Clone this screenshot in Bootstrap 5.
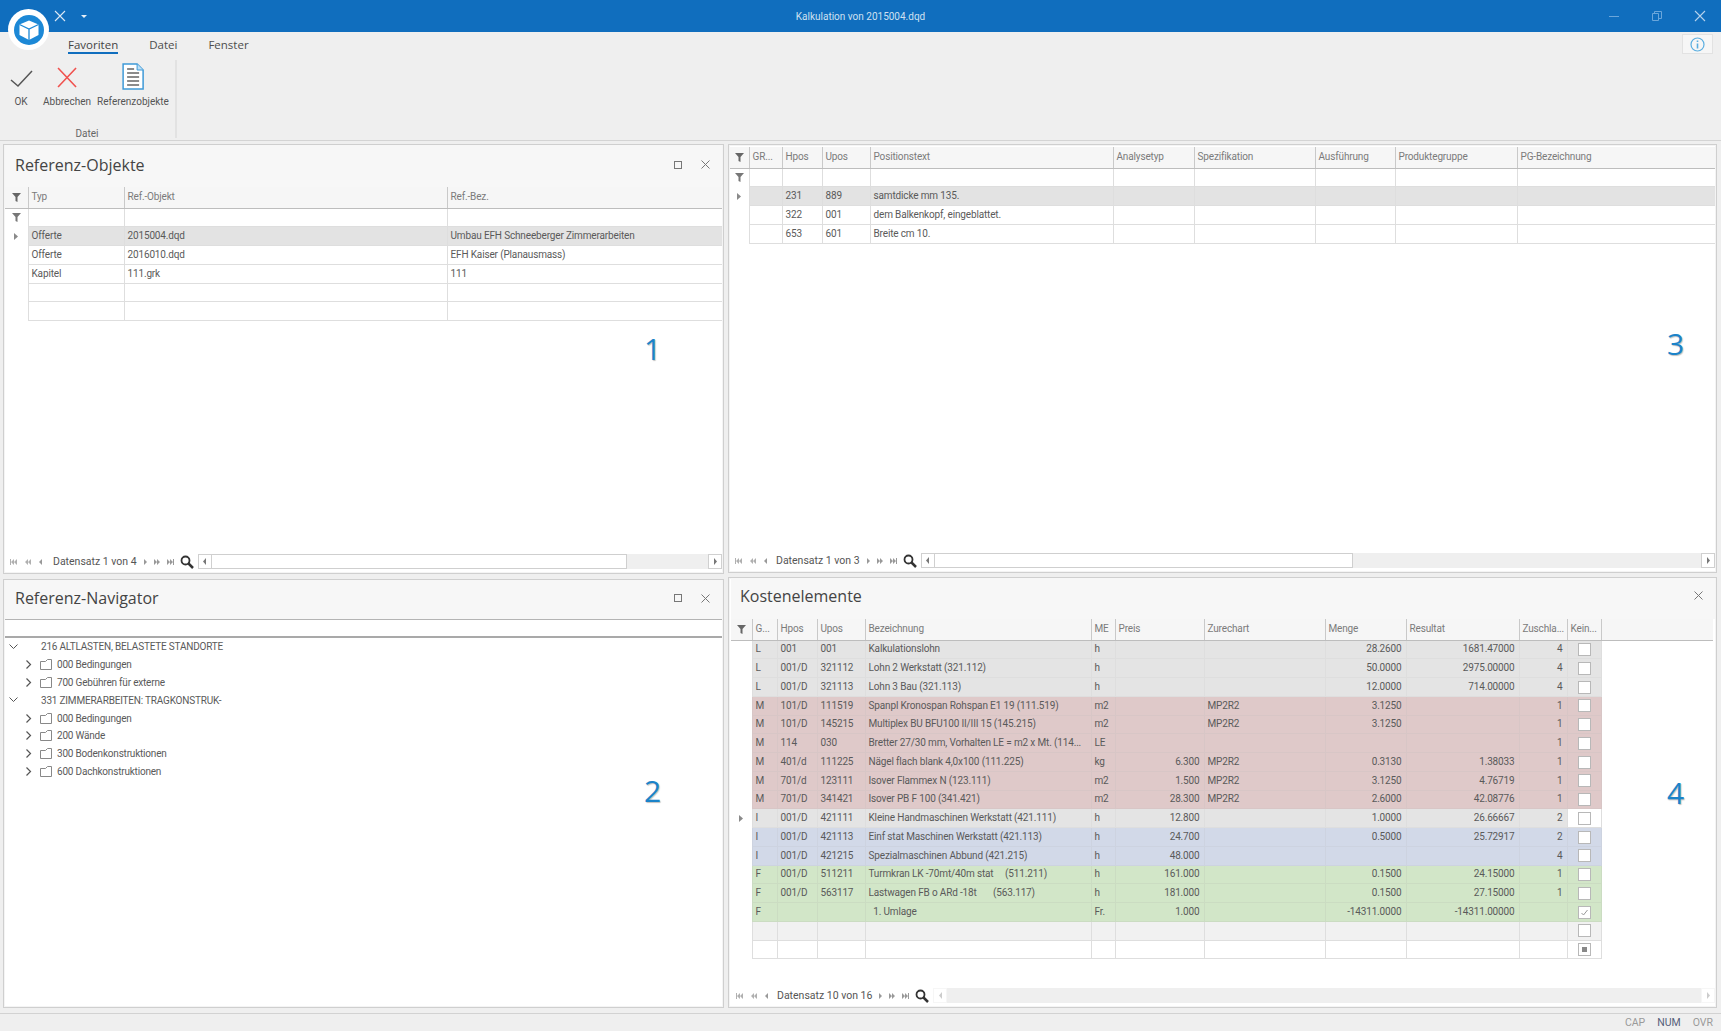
<!DOCTYPE html>
<html lang="de">
<head>
  <meta charset="UTF-8">
  <meta name="viewport" content="width=device-width, initial-scale=1">
  <title>Kalkulation von 2015004.dqd</title>
  <link href="https://cdn.jsdelivr.net/npm/bootstrap@5.3.0/dist/css/bootstrap.min.css" rel="stylesheet">
  <style>
    html, body { height: 100%; overflow: hidden; }
    body { background: #efefef; font-family: Roboto, sans-serif; font-size: 10px; color: #555; position: relative; }
    .app-shell { width: 1721px; height: 1031px; }

    /* title bar */
    .title-bar { height: 32px; background: #106ebe; color: #cfe0f1; font-size: 10px; position: relative; }
    .title-text { width: 100%; text-align: center; padding-top: 1px; }
    .win-btns { position: absolute; right: 0; top: 0; height: 32px; }
    .win-btns svg { position: absolute; top: 10px; }
    .win-min { right: 102px; } .win-max { right: 59px; } .win-close { right: 15px; }
    .qa-x { position: absolute; left: 54px; top: 10px; }
    .qa-drop { position: absolute; left: 81px; top: 15px; }
    .app-logo { position: absolute; left: 8px; top: 9px; width: 41px; height: 41px; border-radius: 50%; background: #fff; z-index: 5; }
    .app-logo svg { display: block; margin: 5.5px; }

    /* ribbon */
    .ribbon { height: 109px; border-bottom: 1px solid #d4d4d4; position: relative; }
    .rib-tabs { height: 28px; padding-left: 68px; gap: 31px; font-size: 11.5px; color: #4d4d4d; font-family: "Open Sans", sans-serif; }
    .rib-tab { height: 22px; line-height: 26px; }
    .rib-tab.on-tab { border-bottom: 2px solid #106ebe; color: #444; }
    .rib-group { width: 177px; height: 78px; border-right: 2px solid #e2e2e2; position: relative; }
    .rib-btn { position: absolute; top: 3px; text-align: center; white-space: nowrap; transform: translateX(-50%); color: #555; }
    .rib-btn svg { display: block; margin: 0 auto; height: 27px; }
    .rib-btn span { display: block; margin-top: 6px; line-height: 12px; }
    .rib-cap { position: absolute; top: 66px; left: 87px; transform: translateX(-50%); color: #666; }
    .info-btn { position: absolute; left: 1682px; top: 2px; width: 31px; height: 20px; background: #f6f6f6; border: 1px solid #e2e2e2; }
    .info-btn svg { display: block; margin: 2px auto 0; }

    /* panels */
    .dock { padding: 3px 4px 0 3px; gap: 4px; }
    .dock-left { width: 721px; }
    .dock-right { width: 989px; }
    .pane { border: 1px solid #cfcfcf; border-radius: 0; background: #fff; padding: 0 1px 1px; box-shadow: inset 0 0 0 1px #f4f4f4; }
    .pane-h1 { height: 430px; margin-bottom: 5px; }
    .pane-h2 { height: 429px; }
    .pane-h3 { height: 429px; margin-bottom: 4px; padding-top: 2px; }
    .pane-h4 { height: 431px; padding-left: 2px; }
    .pane-head { height: 42px; background: #f7f7f7; border: 0; border-radius: 0 !important; padding: 0 12px 3px 10px; color: #444; font-family: "Open Sans", sans-serif; font-size: 16px; }
    .pane-head-2 { height: 39px; padding-bottom: 3px; }
    .pane-head-4 { height: 41px; padding: 0 12px 6px 9px; }
    .pane-tools { gap: 19px; }
    .pane-body { min-height: 0; position: relative; }

    /* grids */
    .grid-wrap { flex: 1 1 auto; min-height: 0; overflow: hidden; }
    .table.grid-tbl { table-layout: fixed; margin: 0; border-collapse: collapse; }
    .table.grid-tbl > * > tr { border-width: 0; }
    .table.grid-tbl > * > tr > * { padding: 0 3px; height: 18.76px; line-height: 14px; font-size: 10px; letter-spacing: -.15px; font-weight: 400; color: #5a5a5a; border: 1px solid #dedede; white-space: pre; overflow: hidden; box-shadow: none; background: var(--cell-bg, #fff); vertical-align: middle; }
    .table.grid-tbl > thead > tr > th { height: 21px; background: #f6f6f6; color: #7b7b7b; border-width: 0 1px 1px 0; border-color: #c6c6c6 #c9c9c9 #bdbdbd; }
    .table.grid-tbl > * > tr > .ind-cell { padding: 0; text-align: center; background: #fff; border-width: 0 1px 0 0; }
    .table.grid-tbl > thead > tr > .ind-cell { background: #f6f6f6; border-bottom: 1px solid #bdbdbd; }
    .table.grid-tbl > * > tr > .fill-cell { border: 0; background: #fff; }
    .table.grid-tbl > thead > tr > .fill-cell { background: #f6f6f6; border-bottom: 1px solid #bdbdbd; }
    .table.grid-tbl > * > tr > .num-cell { text-align: right; padding-right: 4px; }
    .table.grid-tbl > * > tr > .chk-cell { padding: 0; text-align: center; }
    .row-sel { --cell-bg: #e3e3e3; }
    .row-l { --cell-bg: #e4e4e4; }
    .row-m { --cell-bg: #dfc9c9; }
    .row-i { --cell-bg: #d2d9e8; }
    .row-f { --cell-bg: #d2e6c8; }
    .row-e { --cell-bg: #f1f1f1; }
    .table.grid-tbl > * > .row-m > * { border-color: #d8c6c6; }
    .table.grid-tbl > * > .row-i > * { border-color: #cdd3e0; }
    .table.grid-tbl > * > .row-f > * { border-color: #cbdcc2; }
    .table.grid-tbl > * > tr > .foc-cell { background: #fff; }
    .chk-box { display: inline-block; width: 13px; height: 13px; background: #fff; border: 1px solid #b8b8b8; vertical-align: middle; position: relative; }
    .chk-box svg { display: block; }
    .chk-box .chk-fill { position: absolute; left: 3px; top: 3px; width: 5px; height: 5px; background: #888; }

    /* record navigator */
    .rec-nav { height: 17px; flex: 0 0 auto; margin-bottom: 2px; color: #555; }
    .rec-btns { width: 48px; flex: 0 0 auto; padding-left: 5px; }
    .rec-btns svg { display: block; margin-right: 8px; flex: 0 0 auto; }
    .rec-btns-next { width: 38px; padding-left: 3px; }
    .rec-btns-next svg { margin-right: 7px; }
    .pane-h3 .rec-btns:first-child, .pane-h4 .rec-btns:first-child { width: 46px; }
    .rec-label { flex: 0 0 auto; white-space: nowrap; padding-right: 4px; font-size: 10.5px; }
    .rec-find { margin: 0 4px 0 1px; display: block; flex: 0 0 auto; }
    .scroll-track { flex: 1 1 auto; height: 15px; background: #efefef; position: relative; }
    .scroll-btn { width: 14px; height: 15px; background: #fff; border: 1px solid #d0d0d0; flex: 0 0 auto; }
    .scroll-btn svg { display: block; margin: 3px auto; }
    .scroll-thumb { height: 15px; background: #fff; border: 1px solid #cfcfcf; border-left: 0; flex: 0 0 auto; }
    .scroll-off { border-color: #f6f6f6; }
    .thumb-1 { width: 415px; } .thumb-3 { width: 418px; }

    /* tree */
    .tree-search { height: 19px; border-top: 1px solid #b4b4b4; border-bottom: 2px solid #a9a9a9; flex: 0 0 auto; }
    .tree-row { height: 17.8px; color: #5a5a5a; white-space: nowrap; letter-spacing: -.2px; }
    .tree-row svg { display: block; flex: 0 0 auto; }
    .tree-top { padding-left: 4px; }
    .tree-top span { margin-left: 23px; }
    .tree-sub { padding-left: 21px; }
    .tree-sub .tree-folder { margin: 0 5px 0 8px; }

    /* callout numbers */
    .call-num { position: absolute; z-index: 4; color: #1b83c9; font-family: "Open Sans", sans-serif; font-size: 30px; line-height: 30px; text-shadow: 1px 1px 1px rgba(0,0,0,.25); }
    .call-1 { left: 644px; top: 334px; }
    .call-2 { left: 644px; top: 776px; }
    .call-3 { left: 1667px; top: 329px; }
    .call-4 { left: 1667px; top: 778px; }

    /* status bar */
    .status-strip { position: absolute; left: 0; right: 0; top: 1013px; height: 18px; border-top: 1px solid #d2d2d2; padding-right: 8px; gap: 12px; color: #9a9a9a; background: #efefef; font-size: 10.5px; }
    .status-on { color: #56607a; }
  </style>
</head>
<body>
  <div class="app-shell d-flex flex-column">
    <!-- Titelleiste -->
    <div class="title-bar d-flex align-items-center">
      <svg class="qa-x" width="12" height="12" viewBox="0 0 12 12"><path d="M1 1l10 10M11 1L1 11" stroke="#dbe8f5" stroke-width="1.1" fill="none"/></svg>
      <svg class="qa-drop" width="6" height="3" viewBox="0 0 6 3"><path d="M0 0h6L3 3z" fill="#e6eff8"/></svg>
      <div class="title-text">Kalkulation von 2015004.dqd</div>
      <div class="win-btns">
        <svg class="win-min" width="10" height="12" viewBox="0 0 10 12"><path d="M0 6.5h10" stroke="#6aa6db" fill="none"/></svg>
        <svg class="win-max" width="10" height="12" viewBox="0 0 10 12"><path d="M.5 3.5h6v7h-6zM2.5 3.500v-2h7v7h-3" stroke="#6aa6db" fill="none"/></svg>
        <svg class="win-close" width="12" height="12" viewBox="0 0 12 12"><path d="M1 1l10 10M11 1L1 11" stroke="#b5d2ec" stroke-width="1.1" fill="none"/></svg>
      </div>
    </div>
    <div class="app-logo">
      <svg width="30" height="30" viewBox="0 0 30 30">
        <circle cx="15" cy="15" r="15" fill="#1c88d6"/>
        <path d="M15 5.500l9.500 4v10.500L15 25l-9.500-5V9.500z" fill="#fff"/>
        <path d="M5.500 9.500L15 14l9.500-4.500M15 14v11" stroke="#1c88d6" stroke-width="1.300" fill="none"/>
      </svg>
    </div>

    <!-- Ribbon -->
    <div class="ribbon">
      <div class="rib-tabs d-flex align-items-start">
        <div class="rib-tab on-tab">Favoriten</div>
        <div class="rib-tab">Datei</div>
        <div class="rib-tab">Fenster</div>
      </div>
      <div class="rib-group">
        <div class="rib-btn" style="left:21px">
          <svg width="24" height="27" viewBox="0 0 24 27"><path d="M2 17l7 6L23 8" stroke="#555" stroke-width="1.500" fill="none"/></svg>
          <span>OK</span>
        </div>
        <div class="rib-btn" style="left:67px">
          <svg width="22" height="27" viewBox="0 0 22 27"><path d="M2 5l18 19M20 5L2 24" stroke="#f0524f" stroke-width="1.600" fill="none"/></svg>
          <span>Abbrechen</span>
        </div>
        <div class="rib-btn" style="left:133px">
          <svg width="22" height="27" viewBox="0 0 22 27">
            <path d="M1 1h14l6 6v19H1z" fill="#fff" stroke="#3f9ad8" stroke-width="1.500"/>
            <path d="M15 1v6h6" fill="#bfe0f5" stroke="#3f9ad8"/>
            <path d="M5 6h7M5 10h12M5 14h12M5 18h12M5 22h12" stroke="#666" stroke-width="1.700" fill="none"/>
          </svg>
          <span>Referenzobjekte</span>
        </div>
        <div class="rib-cap">Datei</div>
      </div>
      <div class="info-btn">
        <svg width="15" height="15" viewBox="0 0 15 15"><circle cx="7.500" cy="7.500" r="6.500" fill="none" stroke="#5aaee0" stroke-width="1.200"/><path d="M7.500 6.500v5M7.500 3.500v1.600" stroke="#5aaee0" stroke-width="1.600"/></svg>
      </div>
    </div>

    <!-- Arbeitsbereich -->
    <div class="dock d-flex">
      <div class="dock-left d-flex flex-column">
        <div class="card pane pane-h1">
          <div class="card-header pane-head d-flex justify-content-between align-items-center">
            <span>Referenz-Objekte</span>
            <span class="pane-tools d-flex align-items-center" data-tools="2"></span>
          </div>
          <div class="pane-body d-flex flex-column flex-grow-1">
            <div class="grid-wrap" id="grid-ref"></div>
            <div class="rec-nav d-flex align-items-center" data-label="Datensatz 1 von 4" data-thumb="thumb-1"></div>
          </div>
        </div>
        <div class="card pane pane-h2">
          <div class="card-header pane-head pane-head-2 d-flex justify-content-between align-items-center">
            <span>Referenz-Navigator</span>
            <span class="pane-tools d-flex align-items-center" data-tools="2"></span>
          </div>
          <div class="tree-search"></div>
          <div class="tree-list" id="tree"></div>
        </div>
      </div>
      <div class="dock-right d-flex flex-column">
        <div class="card pane pane-h3">
          <div class="pane-body d-flex flex-column flex-grow-1">
            <div class="grid-wrap" id="grid-pos"></div>
            <div class="rec-nav d-flex align-items-center" data-label="Datensatz 1 von 3" data-thumb="thumb-3"></div>
          </div>
        </div>
        <div class="card pane pane-h4">
          <div class="card-header pane-head pane-head-4 d-flex justify-content-between align-items-center">
            <span>Kostenelemente</span>
            <span class="pane-tools d-flex align-items-center" data-tools="1"></span>
          </div>
          <div class="pane-body d-flex flex-column flex-grow-1">
            <div class="grid-wrap" id="grid-kost"></div>
            <div class="rec-nav d-flex align-items-center" data-label="Datensatz 10 von 16"></div>
          </div>
        </div>
      </div>
    </div>
  </div>

  <div class="call-num call-1">1</div>
  <div class="call-num call-2">2</div>
  <div class="call-num call-3">3</div>
  <div class="call-num call-4">4</div>

  <div class="status-strip d-flex align-items-center justify-content-end">
    <span>CAP</span><span class="status-on">NUM</span><span>OVR</span>
  </div>

  <script src="https://cdn.jsdelivr.net/npm/bootstrap@5.3.0/dist/js/bootstrap.bundle.min.js"></script>
  <script>
    const funnel = c => `<svg width="9" height="9" viewBox="0 0 9 9"><path d="M0 0h9L5.500 4v5l-2-1V4z" fill="${c}"/></svg>`;
    const rowArrow = '<svg width="4" height="7" viewBox="0 0 4 7"><path d="M0 0l4 3.500L0 7z" fill="#8a8a8a"/></svg>';
    const chkHtml = s => {
      if (s === 'on') return '<span class="chk-box"><svg width="11" height="11" viewBox="0 0 11 11"><path d="M2.500 6l2 2 4-5" stroke="#999" fill="none"/></svg></span>';
      if (s === 'mix') return '<span class="chk-box"><span class="chk-fill"></span></span>';
      return '<span class="chk-box"></span>';
    };

    function buildGrid(el, g) {
      const cols = g.widths.map(w => `<col style="width:${w}px">`).join('');
      const total = g.widths.reduce((a, b) => a + b, 0);
      const hasFill = g.fill;
      const head = `<th class="ind-cell">${funnel('#666')}</th>` + g.head.map(h => `<th>${h}</th>`).join('') + (hasFill ? '<th class="fill-cell"></th>' : '');
      let body = '';
      if (g.filter) {
        body += `<tr><td class="ind-cell">${funnel('#777')}</td>` + g.head.map(() => '<td></td>').join('') + '</tr>';
      }
      g.rows.forEach(r => {
        const cells = r.cells.map((c, i) => {
          if (g.chk === i) return `<td class="chk-cell${r.focus ? ' foc-cell' : ''}">${chkHtml(c)}</td>`;
          return `<td${g.right && g.right.includes(i) ? ' class="num-cell"' : ''}>${c}</td>`;
        }).join('');
        body += `<tr class="${r.cls || ''}"><td class="ind-cell">${r.mark ? rowArrow : ''}</td>${cells}${hasFill ? '<td class="fill-cell"></td>' : ''}</tr>`;
      });
      el.innerHTML = `<table class="table table-bordered grid-tbl" style="width:${total}px"><colgroup>${cols}</colgroup><thead><tr>${head}</tr></thead><tbody>${body}</tbody></table>`;
    }

    buildGrid(document.getElementById('grid-ref'), {
      widths: [23, 96, 323, 275], filter: true,
      head: ['Typ', 'Ref.-Objekt', 'Ref.-Bez.'],
      rows: [
        { cls: 'row-sel', mark: true, cells: ['Offerte', '2015004.dqd', 'Umbau EFH Schneeberger Zimmerarbeiten'] },
        { cells: ['Offerte', '2016010.dqd', 'EFH Kaiser (Planausmass)'] },
        { cells: ['Kapitel', '111.grk', '111'] },
        { cells: ['', '', ''] },
        { cells: ['', '', ''] }
      ]
    });

    buildGrid(document.getElementById('grid-pos'), {
      widths: [19, 33, 40, 48, 243, 81, 121, 80, 122, 198], filter: true,
      head: ['GR...', 'Hpos', 'Upos', 'Positionstext', 'Analysetyp', 'Spezifikation', 'Ausführung', 'Produktegruppe', 'PG-Bezeichnung'],
      rows: [
        { cls: 'row-sel', mark: true, cells: ['', '231', '889', 'samtdicke mm 135.', '', '', '', '', ''] },
        { cells: ['', '322', '001', 'dem Balkenkopf, eingeblattet.', '', '', '', '', ''] },
        { cells: ['', '653', '601', 'Breite cm 10.', '', '', '', '', ''] }
      ]
    });

    buildGrid(document.getElementById('grid-kost'), {
      widths: [21, 25, 40, 48, 226, 24, 89, 121, 81, 113, 48, 34, 112], fill: true,
      head: ['G...', 'Hpos', 'Upos', 'Bezeichnung', 'ME', 'Preis', 'Zurechart', 'Menge', 'Resultat', 'Zuschla...', 'Kein...'],
      right: [5, 7, 8, 9], chk: 10,
      rows: [
        { cls: 'row-l', cells: ['L', '001', '001', 'Kalkulationslohn', 'h', '', '', '28.2600', '1681.47000', '4', ''] },
        { cls: 'row-l', cells: ['L', '001/D', '321112', 'Lohn 2 Werkstatt (321.112)', 'h', '', '', '50.0000', '2975.00000', '4', ''] },
        { cls: 'row-l', cells: ['L', '001/D', '321113', 'Lohn 3 Bau (321.113)', 'h', '', '', '12.0000', '714.00000', '4', ''] },
        { cls: 'row-m', cells: ['M', '101/D', '111519', 'Spanpl Kronospan Rohspan E1 19 (111.519)', 'm2', '', 'MP2R2', '3.1250', '', '1', ''] },
        { cls: 'row-m', cells: ['M', '101/D', '145215', 'Multiplex BU BFU100 II/III 15 (145.215)', 'm2', '', 'MP2R2', '3.1250', '', '1', ''] },
        { cls: 'row-m', cells: ['M', '114', '030', 'Bretter 27/30 mm, Vorhalten LE = m2 x Mt. (114...', 'LE', '', '', '', '', '1', ''] },
        { cls: 'row-m', cells: ['M', '401/d', '111225', 'Nägel flach blank 4,0x100 (111.225)', 'kg', '6.300', 'MP2R2', '0.3130', '1.38033', '1', ''] },
        { cls: 'row-m', cells: ['M', '701/d', '123111', 'Isover Flammex N (123.111)', 'm2', '1.500', 'MP2R2', '3.1250', '4.76719', '1', ''] },
        { cls: 'row-m', cells: ['M', '701/D', '341421', 'Isover PB F 100 (341.421)', 'm2', '28.300', 'MP2R2', '2.6000', '42.08776', '1', ''] },
        { cls: 'row-l', mark: true, focus: true, cells: ['I', '001/D', '421111', 'Kleine Handmaschinen Werkstatt (421.111)', 'h', '12.800', '', '1.0000', '26.66667', '2', ''] },
        { cls: 'row-i', cells: ['I', '001/D', '421113', 'Einf stat Maschinen Werkstatt (421.113)', 'h', '24.700', '', '0.5000', '25.72917', '2', ''] },
        { cls: 'row-i', cells: ['I', '001/D', '421215', 'Spezialmaschinen Abbund (421.215)', 'h', '48.000', '', '', '', '4', ''] },
        { cls: 'row-f', cells: ['F', '001/D', '511211', 'Turmkran LK -70mt/40m stat     (511.211)', 'h', '161.000', '', '0.1500', '24.15000', '1', ''] },
        { cls: 'row-f', cells: ['F', '001/D', '563117', 'Lastwagen FB o ARd -18t       (563.117)', 'h', '181.000', '', '0.1500', '27.15000', '1', ''] },
        { cls: 'row-f', cells: ['F', '', '', '  1. Umlage', 'Fr.', '1.000', '', '-14311.0000', '-14311.00000', '', 'on'] },
        { cls: 'row-e', cells: ['', '', '', '', '', '', '', '', '', '', ''] },
        { cells: ['', '', '', '', '', '', '', '', '', '', 'mix'] }
      ]
    });

    // Baum links unten
    const tree = [
      [0, '216 ALTLASTEN, BELASTETE STANDORTE'],
      [1, '000 Bedingungen'], [1, '700 Gebühren für externe'],
      [0, '331 ZIMMERARBEITEN: TRAGKONSTRUK-'],
      [1, '000 Bedingungen'], [1, '200 Wände'], [1, '300 Bodenkonstruktionen'], [1, '600 Dachkonstruktionen']
    ];
    const chevDown = '<svg width="9" height="6" viewBox="0 0 9 6"><path d="M.5 .5l4 4 4-4" stroke="#555" fill="none"/></svg>';
    const chevRight = '<svg width="6" height="9" viewBox="0 0 6 9"><path d="M.5 .5l4 4-4 4" stroke="#555" stroke-width="1.200" fill="none"/></svg>';
    const folder = '<svg class="tree-folder" width="12" height="11" viewBox="0 0 12 11"><path d="M.5 10.500V2.500h5l2-2h4v10z" fill="#fff" stroke="#888"/></svg>';
    document.getElementById('tree').innerHTML = tree.map(([lvl, txt]) => lvl
      ? `<div class="tree-row tree-sub d-flex align-items-center">${chevRight}${folder}<span>${txt}</span></div>`
      : `<div class="tree-row tree-top d-flex align-items-center">${chevDown}<span>${txt}</span></div>`).join('');

    // Fenster-Knöpfe der Panels
    const maxIcon = '<svg width="8" height="8" viewBox="0 0 8 8"><rect x=".5" y=".5" width="7" height="7" fill="none" stroke="#777"/></svg>';
    const closeIcon = '<svg width="9" height="9" viewBox="0 0 9 9"><path d="M.5 .5l8 8M8.500 .5l-8 8" stroke="#777" fill="none"/></svg>';
    document.querySelectorAll('[data-tools]').forEach(el => {
      el.innerHTML = (el.dataset.tools === '2' ? maxIcon : '') + closeIcon;
    });

    // Datensatz-Navigator
    const navPaths = {
      first: '<svg width="7" height="6" viewBox="0 0 7 6"><path d="M0 0h1v6H0zM4 0v6L1 3zM7 0v6L4 3z" fill="#b0b0b0"/></svg>',
      prevp: '<svg width="6" height="6" viewBox="0 0 6 6"><path d="M3 0v6L0 3zM6 0v6L3 3z" fill="#b0b0b0"/></svg>',
      prev: '<svg width="3" height="6" viewBox="0 0 3 6"><path d="M3 0v6L0 3z" fill="#999"/></svg>',
      next: '<svg width="3" height="6" viewBox="0 0 3 6"><path d="M0 0v6l3-3z" fill="#999"/></svg>',
      nextp: '<svg width="6" height="6" viewBox="0 0 6 6"><path d="M0 0v6l3-3zM3 0v6l3-3z" fill="#999"/></svg>',
      last: '<svg width="7" height="6" viewBox="0 0 7 6"><path d="M0 0v6l3-3zM3 0v6l3-3zM6 0h1v6H6z" fill="#999"/></svg>'
    };
    const lens = '<svg class="rec-find" width="14" height="14" viewBox="0 0 14 14"><circle cx="5.500" cy="5.500" r="4" fill="none" stroke="#333" stroke-width="1.800"/><path d="M8.500 8.500l4.500 4.500" stroke="#333" stroke-width="2.500"/></svg>';
    const arrowL = c => `<svg width="3" height="7" viewBox="0 0 3 7"><path d="M3 0v7L0 3.500z" fill="${c}"/></svg>`;
    const arrowR = c => `<svg width="3" height="7" viewBox="0 0 3 7"><path d="M0 0v7l3-3.500z" fill="${c}"/></svg>`;
    document.querySelectorAll('.rec-nav').forEach(el => {
      const t = el.dataset.thumb;
      el.innerHTML = `<div class="rec-btns d-flex align-items-center">${navPaths.first}${navPaths.prevp}${navPaths.prev}</div>
        <div class="rec-label">${el.dataset.label}</div>
        <div class="rec-btns rec-btns-next d-flex align-items-center">${navPaths.next}${navPaths.nextp}${navPaths.last}</div>
        ${lens}
        <div class="scroll-track d-flex justify-content-between">
          <div class="d-flex"><div class="scroll-btn${t ? '' : ' scroll-off'}">${arrowL(t ? '#777' : '#ccc')}</div>${t ? `<div class="scroll-thumb ${t}"></div>` : ''}</div>
          <div class="scroll-btn${t ? '' : ' scroll-off'}">${arrowR(t ? '#777' : '#ccc')}</div>
        </div>`;
    });
  </script>
</body>
</html>
